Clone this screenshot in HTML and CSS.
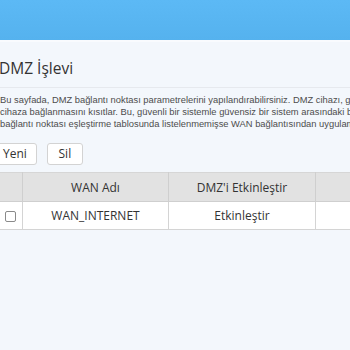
FILE: index.html
```html
<!DOCTYPE html>
<html lang="tr">
<head>
<meta charset="utf-8">
<link rel="stylesheet" href="styles.css">
</head>
<body>
<div class="topbar"></div>
<div class="topline"></div>
<main class="content">
  <h1 class="title">DMZ İşlevi</h1>
  <p class="desc">Bu sayfada, DMZ bağlantı noktası parametrelerini yapılandırabilirsiniz. DMZ cihazı, güvenli olmayan<br>cihaza bağlanmasını kısıtlar. Bu, güvenli bir sistemle güvensiz bir sistem arasındaki bir tampon bölgedir.<br>bağlantı noktası eşleştirme tablosunda listelenmemişse WAN bağlantısından uygulama</p>
  <div class="actions">
    <button class="btn">Yeni</button>
    <button class="btn">Sil</button>
  </div>
  <table class="grid">
    <thead>
      <tr>
        <th class="c-check"></th>
        <th class="c-name">WAN Adı</th>
        <th class="c-dmz">DMZ'i Etkinleştir</th>
        <th class="c-ip"></th>
      </tr>
    </thead>
    <tbody>
      <tr>
        <td class="c-check"><span class="checkbox"></span></td>
        <td class="c-name">WAN_INTERNET</td>
        <td class="c-dmz">Etkinleştir</td>
        <td class="c-ip"></td>
      </tr>
    </tbody>
  </table>
</main>
</body>
</html>
```
FILE: styles.css
```css
html, body {
  margin: 0;
  padding: 0;
  overflow: hidden;
}
body {
  background: #f3f7fc;
  width: 350px;
  height: 350px;
}
.topbar {
  height: 40px;
  background: linear-gradient(#5cb9f5, #55b2ee);
}
.topline {
  height: 2px;
  background: #f9fbfe;
}
.content {
  margin-left: -7px;
  width: 420px;
}
.title {
  margin: 0;
  padding: 15px 0 8px 6px;
  font-family: "Open Sans", sans-serif;
  font-weight: 400;
  font-size: 15.5px;
  line-height: 22px;
  color: #333;
  border-bottom: 1px solid #e6e9ee;
}
.desc {
  margin: 0;
  padding: 6px 0 0 7px;
  font-family: "Liberation Sans", Arial, sans-serif;
  font-size: 9.35px;
  line-height: 12px;
  color: #4d4d4d;
  white-space: nowrap;
}
.actions {
  display: flex;
  gap: 10px;
  padding-top: 13px;
}
.btn {
  font-family: "Open Sans", sans-serif;
  font-size: 12px;
  color: #333;
  background: #fff;
  border: 1px solid #d3d3d3;
  border-radius: 3px;
  height: 22px;
  min-width: 36px;
  padding: 0 9px;
  line-height: 18px;
}
.grid {
  margin-top: 7px;
  margin-left: 4px;
  border-collapse: collapse;
  font-family: "Open Sans", sans-serif;
  font-size: 12px;
  color: #333;
}
.grid th {
  background: #e2e2e2;
  font-weight: 400;
  height: 28px;
  padding: 0;
  border-top: 1px solid #d6d6d6;
  border-bottom: 1px solid #cfcfcf;
  border-right: 1px solid #cfcfcf;
}
.grid td {
  background: #fff;
  height: 27px;
  padding: 0;
  text-align: center;
  border-bottom: 1px solid #d4d4d4;
  border-right: 1px solid #d4d4d4;
}
.c-check { width: 25px; }
.c-name { width: 145px; }
.c-dmz { width: 146px; }
.c-ip { width: 60px; }
.checkbox {
  display: inline-block;
  width: 9px;
  height: 9px;
  border: 1px solid #8a8a8a;
  border-radius: 2px;
  background: #fff;
  vertical-align: middle;
  margin-left: 2px;
}
```
